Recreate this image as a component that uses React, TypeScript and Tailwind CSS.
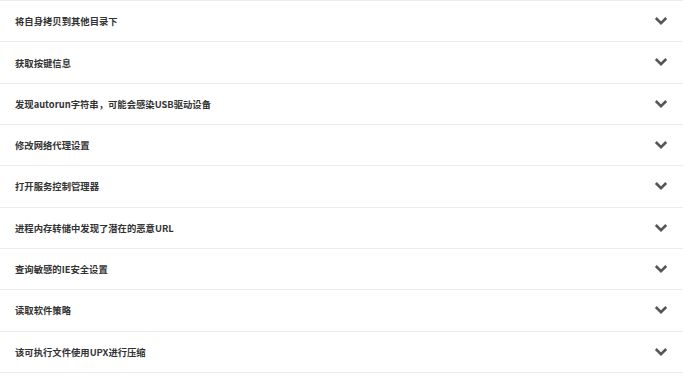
import React from "react";

const items = [
  "将自身拷贝到其他目录下",
  "获取按键信息",
  "发现autorun字符串，可能会感染USB驱动设备",
  "修改网络代理设置",
  "打开服务控制管理器",
  "进程内存转储中发现了潜在的恶意URL",
  "查询敏感的IE安全设置",
  "读取软件策略",
  "该可执行文件使用UPX进行压缩",
];

function Chevron() {
  return (
    <svg width="14" height="10" viewBox="0 0 14 10" className="text-[#555]">
      <polyline
        points="1.8,2 7,7.2 12.2,2"
        fill="none"
        stroke="currentColor"
        strokeWidth="2.6"
        strokeLinecap="butt"
        strokeLinejoin="miter"
      />
    </svg>
  );
}

export default function App() {
  return (
    <div className="w-[693px] h-[377px] bg-white overflow-hidden">
      <div className="w-[683px] border-b border-[#ececec]">
        {items.map((t) => (
          <div
            key={t}
            className="h-[41.33px] border-t border-[#ececec] flex items-center justify-between pl-[15px] pr-[15px]"
          >
            <span
              className="text-[9.33px] font-bold text-[#333]"
              style={{ fontFamily: '"Noto Sans CJK SC", "Noto Sans", sans-serif' }}
            >
              {t}
            </span>
            <Chevron />
          </div>
        ))}
      </div>
    </div>
  );
}
